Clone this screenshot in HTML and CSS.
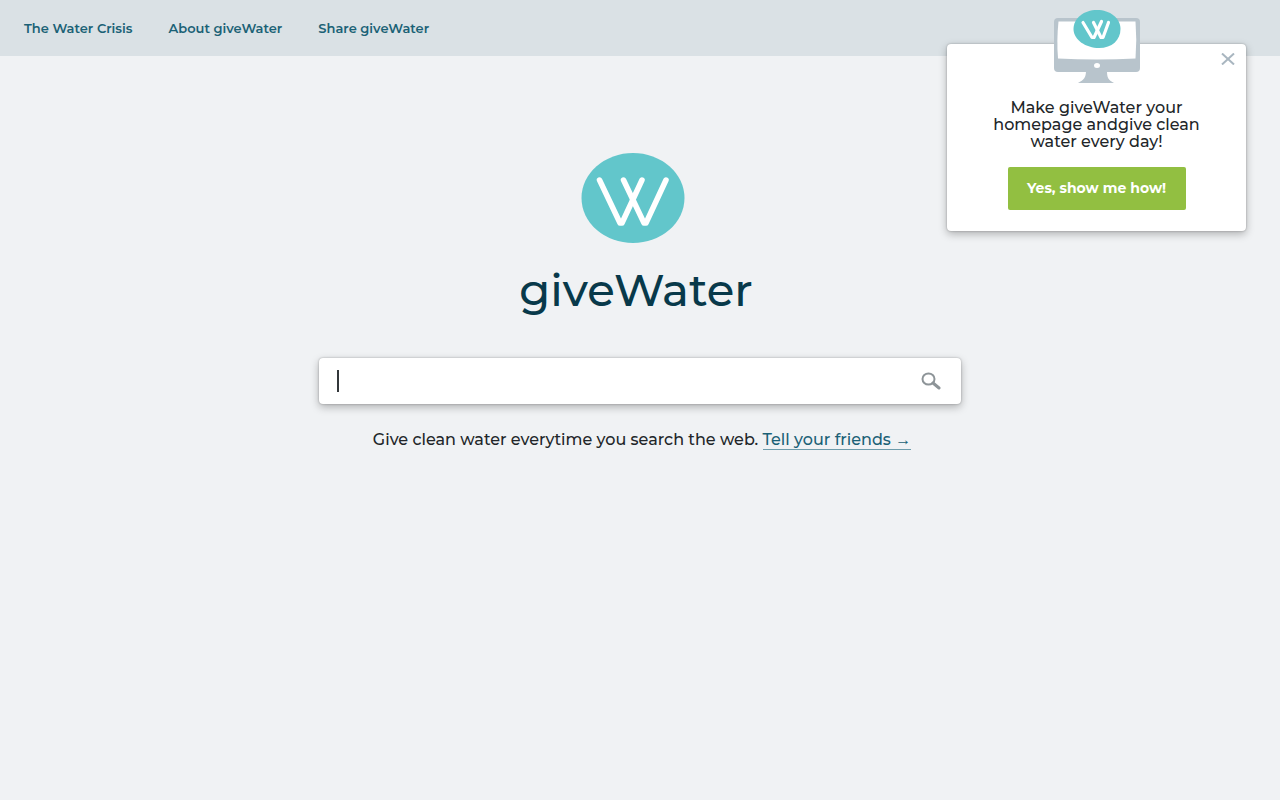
FILE: index.html
```html
<!DOCTYPE html>
<html lang="en">
<head>
<meta charset="utf-8">
<meta name="viewport" content="width=device-width, initial-scale=1">
<title>giveWater</title>
<link rel="stylesheet" href="styles.css">
</head>
<body>
<header class="topbar">
  <nav class="nav" aria-label="Main">
    <a href="#crisis">The Water Crisis</a>
    <a href="#about">About giveWater</a>
    <a href="#share">Share giveWater</a>
  </nav>
</header>

<main class="page">
  <div class="brand">
    <svg class="emblem" viewBox="0 0 110 92" aria-hidden="true">
      <ellipse cx="52" cy="46" rx="51.500" ry="45" fill="#62c6cb"/>
      <g fill="none" stroke="#fff" stroke-width="5.500" stroke-linecap="round" stroke-linejoin="round">
        <path d="M18.500 28L39 71h2L61 28"/>
        <path d="M42.500 28L63 71h2L85 28"/>
      </g>
    </svg>
    <h1 class="wordmark">giveWater</h1>
  </div>

  <form class="search" role="search">
    <input class="search-input" type="text" aria-label="Search the web" autocomplete="off">
    <button class="search-button" type="submit" aria-label="Search">
      <svg width="20" height="18" viewBox="0 0 20 18" fill="none" stroke="#8d9498" aria-hidden="true">
        <ellipse cx="7.500" cy="7" rx="6" ry="5.500" stroke-width="2"/>
        <path d="M12 11l6 5" stroke-width="3" stroke-linecap="round"/>
      </svg>
    </button>
  </form>

  <p class="tagline">Give clean water everytime you search the web. <a href="#friends">Tell your friends <span class="arrow">→</span></a></p>
</main>

<aside class="promo" aria-label="Set homepage">
  <svg class="monitor" width="88" height="74" viewBox="0 0 88 74" aria-hidden="true">
    <path d="M33 61h21c0 6 1 9 7 12H25c6-3 8-6 8-12z" fill="#b8c4cc"/>
    <rect x="1" y="8" width="86" height="54" rx="4" fill="#b8c4cc"/>
    <path d="M5.500 11.500h77q1.500 18 0 37Q44 50.500 5 48.500q-1.500-18 .5-37z" fill="#fff"/>
    <ellipse cx="44" cy="55.500" rx="3" ry="2.500" fill="#fff"/>
    <path d="M44 0c13 0 23.500 8 23.500 19S59 38 46 38 20.500 30 20.500 19 31 0 44 0z" fill="#62c6cb"/>
    <g fill="none" stroke="#fff" stroke-width="3.200" stroke-linecap="round" stroke-linejoin="round">
      <path d="M30 12.500l9 15h2l7.500-16"/>
      <path d="M40.500 12.500L48 27.500h2l5.500-15"/>
    </g>
  </svg>
  <button class="close" type="button" aria-label="Close">
    <svg width="14" height="12" viewBox="0 0 14 12" fill="none" stroke="#a9b6c0" stroke-width="2" aria-hidden="true"><path d="M1 .5l12 11M13 .5L1 11.500"/></svg>
  </button>
  <p class="promo-text">Make giveWater your homepage andgive clean water every day!</p>
  <button class="cta" type="button">Yes, show me how!</button>
</aside>
</body>
</html>
```

FILE: styles.css
```css
* { box-sizing: border-box; }

body {
  margin: 0;
  min-height: 100vh;
  background: #f0f2f4;
  color: #222629;
  font-family: Montserrat, Inter, sans-serif;
  font-weight: 500;
}

button { border: 0; cursor: pointer; font-family: inherit; }

a { color: #1b6176; }

.topbar { background: #dae1e5; padding: 0 24px; }

.nav { display: flex; gap: 36px; }

.nav a {
  font-size: 13px;
  line-height: 56px;
  font-weight: 600;
  text-decoration: none;
}

.page {
  display: flex;
  flex-direction: column;
  align-items: center;
  padding: 96px 24px 40px;
}

.brand {
  display: flex;
  flex-direction: column;
  align-items: center;
  gap: 16px;
  padding-right: 8px;
}

.emblem { width: 110px; height: 92px; }

.wordmark {
  margin: 0;
  color: #08394a;
  font-size: 45px;
  line-height: 60px;
  font-weight: 500;
}

.search {
  display: flex;
  align-items: center;
  width: 100%;
  max-width: 642px;
  margin-top: 38px;
  padding: 0 20px 0 18px;
  background: #fff;
  border-radius: 4px;
  box-shadow: 0 0 2px rgba(0, 0, 0, .3), 0 3px 9px rgba(0, 0, 0, .28);
}

.search::before {
  content: "";
  width: 2px;
  height: 22px;
  background: #33373a;
}

.search-input {
  flex: 1;
  min-width: 0;
  height: 46px;
  border: 0;
  outline: 0;
  background: transparent;
  font: inherit;
  caret-color: transparent;
}

.search-button { display: flex; padding: 0; background: none; }

.tagline { margin: 24px 0 0; padding-left: 4px; font-size: 16px; line-height: 24px; }

.tagline a {
  border-bottom: 1px solid #6d9cab;
  text-decoration: none;
}

.arrow { font-family: "Liberation Serif", serif; }

.promo {
  position: absolute;
  top: 44px;
  right: 34px;
  display: flex;
  flex-direction: column;
  align-items: center;
  width: 299px;
  padding: 55px 40px 21px;
  background: #fff;
  border-radius: 4px;
  box-shadow: 0 0 2px rgba(0, 0, 0, .3), 0 3px 9px rgba(0, 0, 0, .28);
}

.monitor { position: absolute; top: -34px; left: 106px; }

.close {
  position: absolute;
  top: 9px;
  right: 11px;
  display: flex;
  padding: 0;
  background: none;
}

.promo-text {
  margin: 0;
  font-size: 16px;
  line-height: 17px;
  text-align: center;
}

.cta {
  width: 178px;
  margin-top: 17px;
  padding: 0;
  background: #92bf41;
  border-radius: 2px;
  color: #fff;
  font-size: 14px;
  line-height: 43px;
  font-weight: 700;
}
```
